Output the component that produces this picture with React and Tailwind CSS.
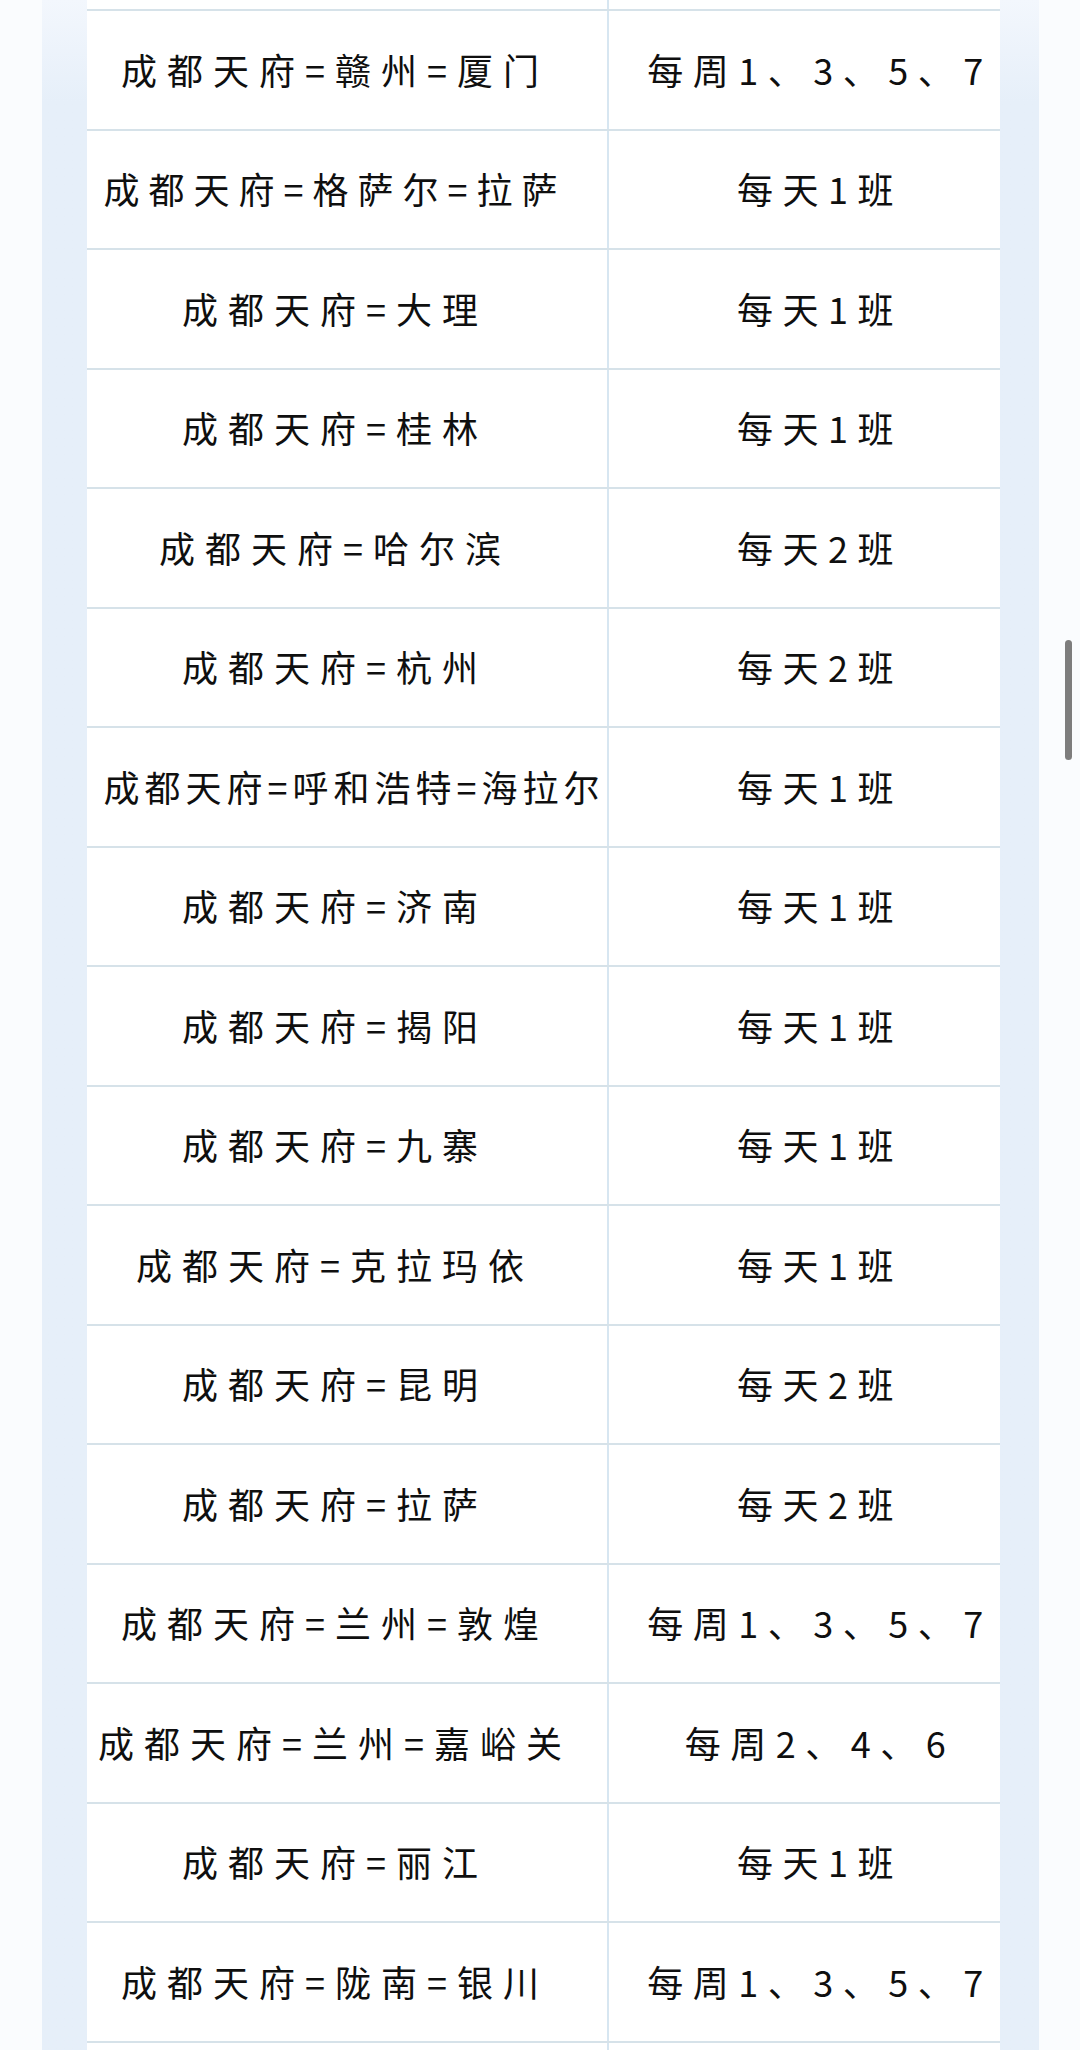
import React from 'react';

// 航线班次表 (左: 航线, 右: 班次)
const routes = [
  { route: '成都天府=赣州=厦门', freq: '每周1、3、5、7' },
  { route: '成都天府=格萨尔=拉萨', freq: '每天1班', tight: 'mid' },
  { route: '成都天府=大理', freq: '每天1班' },
  { route: '成都天府=桂林', freq: '每天1班' },
  { route: '成都天府=哈尔滨', freq: '每天2班' },
  { route: '成都天府=杭州', freq: '每天2班' },
  { route: '成都天府=呼和浩特=海拉尔', freq: '每天1班', tight: 'long' },
  { route: '成都天府=济南', freq: '每天1班' },
  { route: '成都天府=揭阳', freq: '每天1班' },
  { route: '成都天府=九寨', freq: '每天1班' },
  { route: '成都天府=克拉玛依', freq: '每天1班' },
  { route: '成都天府=昆明', freq: '每天2班' },
  { route: '成都天府=拉萨', freq: '每天2班' },
  { route: '成都天府=兰州=敦煌', freq: '每周1、3、5、7' },
  { route: '成都天府=兰州=嘉峪关', freq: '每周2、4、6' },
  { route: '成都天府=丽江', freq: '每天1班' },
  { route: '成都天府=陇南=银川', freq: '每周1、3、5、7' },
];

const font = { fontFamily: '"Noto Sans CJK SC", "Noto Sans", sans-serif' };

const Row = ({ item }) => {
  // 最长的一行字距收紧, 占满整列
  let leftCls = 'pr-[24px] tracking-[10px]';
  if (item.tight === 'long') leftCls = 'pl-[14px] tracking-[5px]';
  if (item.tight === 'mid') leftCls = 'pr-[24px] tracking-[9px]';

  return (
    <div className="grid h-[119.5px] grid-cols-[522px_391px] border-b-2 border-[#d6e2e9] bg-white">
      <div className={`flex items-center justify-center whitespace-nowrap border-r-2 border-[#d7e6f1] pb-[2px] text-[36px] text-[#0f0f0f] ${leftCls}`}>
        {item.route}
      </div>
      <div className="flex items-center justify-center whitespace-nowrap pb-[2px] pl-[31px] text-[36px] tracking-[9.5px] text-[#0f0f0f]">
        {item.freq}
      </div>
    </div>
  );
};

export default function App() {
  return (
    <div className="relative h-[2050px] w-[1080px] overflow-hidden bg-[#fafcfe]" style={font}>
      <div className="ml-[42px] h-full w-[997px] bg-linear-to-b from-[#f3f7fd] from-0% to-[#e6eff9] to-[5%] pl-[45px] pr-[39px]">
        {/* 上一行的残余部分 */}
        <div className="grid h-[11px] grid-cols-[522px_391px] border-b-2 border-[#d6e2e9] bg-white">
          <div className="border-r-2 border-[#d7e6f1]"></div>
          <div></div>
        </div>
        {routes.map((r) => (
          <Row key={r.route} item={r} />
        ))}
        <div className="grid h-[20px] grid-cols-[522px_391px] bg-white">
          <div className="border-r-2 border-[#d7e6f1]"></div>
          <div></div>
        </div>
      </div>

      {/* 滚动条 */}
      <div className="absolute left-[1065px] top-[640px] h-[120px] w-[7px] rounded-full bg-[#7d7d7d]"></div>
    </div>
  );
}
